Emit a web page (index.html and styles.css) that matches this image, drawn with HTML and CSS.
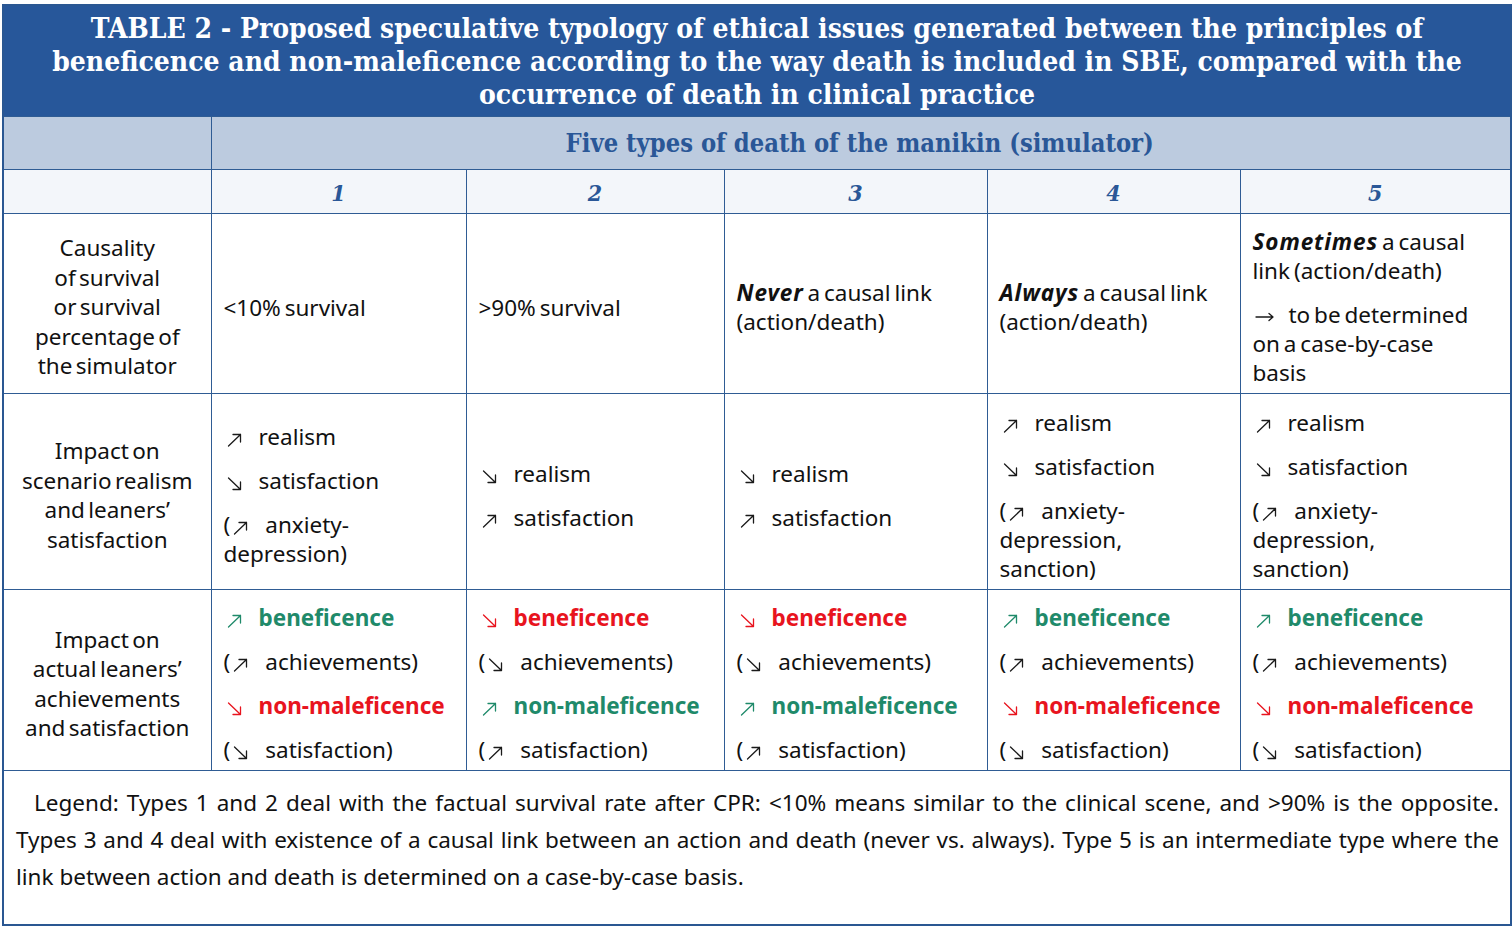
FILE: index.html
```html
<!DOCTYPE html>
<html lang="en">
<head>
<meta charset="utf-8">
<title>Table 2</title>
<link rel="stylesheet" href="styles.css">
</head>
<body>
<svg width="0" height="0" class="defs" aria-hidden="true">
  <defs>
    <symbol id="up" viewBox="0 0 15 14"><path d="M1.5 13 L13.5 1.5 M6 1.5 H13.5 V9" fill="none" stroke="currentColor" stroke-width="1.3" stroke-linecap="round" stroke-linejoin="round"/></symbol>
    <symbol id="down" viewBox="0 0 15 14"><path d="M1.5 1 L13.5 12.5 M6 12.5 H13.5 V5" fill="none" stroke="currentColor" stroke-width="1.3" stroke-linecap="round" stroke-linejoin="round"/></symbol>
    <symbol id="right" viewBox="0 0 20 10"><path d="M1 5 H18 M14 1.5 L18 5 L14 8.5" fill="none" stroke="currentColor" stroke-width="1.3" stroke-linecap="round" stroke-linejoin="round"/></symbol>
  </defs>
</svg>
<table class="tbl">
  <colgroup>
    <col class="c0"><col class="c1"><col class="c2"><col class="c3"><col class="c4"><col class="c5">
  </colgroup>
  <thead>
    <tr class="r-title">
      <th colspan="6" class="title">TABLE 2 - Proposed speculative typology of ethical issues generated between the principles of<br>beneficence and non-maleficence according to the way death is included in SBE, compared with the<br>occurrence of death in clinical practice</th>
    </tr>
    <tr class="r-head">
      <th class="blank"></th>
      <th colspan="5" class="five">Five types of death of the manikin (simulator)</th>
    </tr>
    <tr class="r-num">
      <th class="blank2"></th>
      <th class="num">1</th>
      <th class="num">2</th>
      <th class="num">3</th>
      <th class="num">4</th>
      <th class="num">5</th>
    </tr>
  </thead>
  <tbody>
    <tr class="r1">
      <td class="label">Causality<br>of survival<br>or survival<br>percentage of<br>the simulator</td>
      <td class="cell">&lt;10% survival</td>
      <td class="cell">&gt;90% survival</td>
      <td class="cell"><b class="em">Never</b> a causal link<br>(action/death)</td>
      <td class="cell"><b class="em">Always</b> a causal link<br>(action/death)</td>
      <td class="cell">
        <p class="it"><b class="em">Sometimes</b> a causal<br>link (action/death)</p>
        <p class="it"><svg class="arr arr-r"><use href="#right"/></svg>to be determined<br>on a case-by-case<br>basis</p>
      </td>
    </tr>
    <tr class="r2">
      <td class="label">Impact on<br>scenario realism<br>and leaners’<br>satisfaction</td>
      <td class="cell">
        <p class="it"><svg class="arr"><use href="#up"/></svg>realism</p>
        <p class="it"><svg class="arr"><use href="#down"/></svg>satisfaction</p>
        <p class="it">(<svg class="arr"><use href="#up"/></svg>anxiety-<br>depression)</p>
      </td>
      <td class="cell">
        <p class="it"><svg class="arr"><use href="#down"/></svg>realism</p>
        <p class="it"><svg class="arr"><use href="#up"/></svg>satisfaction</p>
      </td>
      <td class="cell">
        <p class="it"><svg class="arr"><use href="#down"/></svg>realism</p>
        <p class="it"><svg class="arr"><use href="#up"/></svg>satisfaction</p>
      </td>
      <td class="cell">
        <p class="it"><svg class="arr"><use href="#up"/></svg>realism</p>
        <p class="it"><svg class="arr"><use href="#down"/></svg>satisfaction</p>
        <p class="it">(<svg class="arr"><use href="#up"/></svg>anxiety-<br>depression,<br>sanction)</p>
      </td>
      <td class="cell">
        <p class="it"><svg class="arr"><use href="#up"/></svg>realism</p>
        <p class="it"><svg class="arr"><use href="#down"/></svg>satisfaction</p>
        <p class="it">(<svg class="arr"><use href="#up"/></svg>anxiety-<br>depression,<br>sanction)</p>
      </td>
    </tr>
    <tr class="r3">
      <td class="label">Impact on<br>actual leaners’<br>achievements<br>and satisfaction</td>
      <td class="cell">
        <p class="it good"><svg class="arr"><use href="#up"/></svg>beneficence</p>
        <p class="it">(<svg class="arr"><use href="#up"/></svg>achievements)</p>
        <p class="it bad"><svg class="arr"><use href="#down"/></svg>non-maleficence</p>
        <p class="it">(<svg class="arr"><use href="#down"/></svg>satisfaction)</p>
      </td>
      <td class="cell">
        <p class="it bad"><svg class="arr"><use href="#down"/></svg>beneficence</p>
        <p class="it">(<svg class="arr"><use href="#down"/></svg>achievements)</p>
        <p class="it good"><svg class="arr"><use href="#up"/></svg>non-maleficence</p>
        <p class="it">(<svg class="arr"><use href="#up"/></svg>satisfaction)</p>
      </td>
      <td class="cell">
        <p class="it bad"><svg class="arr"><use href="#down"/></svg>beneficence</p>
        <p class="it">(<svg class="arr"><use href="#down"/></svg>achievements)</p>
        <p class="it good"><svg class="arr"><use href="#up"/></svg>non-maleficence</p>
        <p class="it">(<svg class="arr"><use href="#up"/></svg>satisfaction)</p>
      </td>
      <td class="cell">
        <p class="it good"><svg class="arr"><use href="#up"/></svg>beneficence</p>
        <p class="it">(<svg class="arr"><use href="#up"/></svg>achievements)</p>
        <p class="it bad"><svg class="arr"><use href="#down"/></svg>non-maleficence</p>
        <p class="it">(<svg class="arr"><use href="#down"/></svg>satisfaction)</p>
      </td>
      <td class="cell">
        <p class="it good"><svg class="arr"><use href="#up"/></svg>beneficence</p>
        <p class="it">(<svg class="arr"><use href="#up"/></svg>achievements)</p>
        <p class="it bad"><svg class="arr"><use href="#down"/></svg>non-maleficence</p>
        <p class="it">(<svg class="arr"><use href="#down"/></svg>satisfaction)</p>
      </td>
    </tr>
    <tr class="r-legend">
      <td colspan="6" class="legend">
        <span class="ln ln1">Legend: Types 1 and 2 deal with the factual survival rate after CPR: &lt;10% means similar to the clinical scene, and &gt;90% is the opposite.</span>
        <span class="ln ln2">Types 3 and 4 deal with existence of a causal link between an action and death (never vs. always). Type 5 is an intermediate type where the</span>
        <span class="ln ln3">link between action and death is determined on a case-by-case basis.</span>
      </td>
    </tr>
  </tbody>
</table>
</body>
</html>
```

FILE: styles.css
```css
html, body {
  margin: 0;
  padding: 0;
  background: #ffffff;
}
body {
  padding: 4px 0 0 2px;
  font-family: "Noto Sans", Lato, sans-serif;
  color: #111111;
}
.defs {
  position: absolute;
  width: 0;
  height: 0;
  overflow: hidden;
}
.tbl {
  border-collapse: collapse;
  table-layout: fixed;
  width: 1508px;
  border: 2px solid #2a5792;
}
.c0 { width: 208px; }
.c1 { width: 255px; }
.c2 { width: 258px; }
.c3 { width: 263px; }
.c4 { width: 253px; }
.c5 { width: 271px; }

.tbl th, .tbl td {
  border: 1px solid #2f5c94;
  padding: 0;
}
.tbl .title {
  height: 110px;
  background: #27579a;
  color: #ffffff;
  font-family: "DejaVu Serif Condensed", "DejaVu Serif", serif;
  font-weight: bold;
  font-size: 28px;
  line-height: 33px;
  text-align: center;
  padding: 0;
}
.r-head th {
  height: 52px;
  background: #bccbdf;
}
.tbl .five {
  font-family: "DejaVu Serif Condensed", "DejaVu Serif", serif;
  font-weight: bold;
  font-size: 25.3px;
  color: #2a5797;
  text-align: center;
  padding-right: 2px;
}
.r-num th {
  height: 41px;
  background: #f3f6fa;
}
.tbl .num {
  font-family: "DejaVu Serif Condensed", "DejaVu Serif", serif;
  font-weight: bold;
  font-style: italic;
  font-size: 23px;
  color: #2a5797;
  text-align: center;
  padding-top: 2px;
}
.r1 td { height: 172px; }
.r2 td { height: 188px; }
.r3 td { height: 173px; }
.tbl .label {
  text-align: center;
  vertical-align: middle;
  font-size: 22.5px;
  line-height: 29.5px;
  padding: 7px 3px 0 3px;
  word-spacing: -2.5px;
}
.tbl .cell {
  vertical-align: middle;
  font-size: 22.5px;
  line-height: 29px;
  padding: 7px 4px 0 12px;
  text-align: left;
  word-spacing: -2px;
}
.it {
  margin: 0;
}
.it + .it {
  margin-top: 15px;
}
.em {
  font-style: italic;
  font-weight: bold;
  letter-spacing: 0.9px;
}
.arr {
  width: 15px;
  height: 14px;
  margin-left: 3px;
  margin-right: 17px;
  vertical-align: -2px;
  color: #1a1a1a;
}
.arr-r {
  width: 20px;
  height: 10px;
  margin-left: 2px;
  margin-right: 14px;
  vertical-align: 1px;
}
.good { color: #1f8a6a; font-weight: bold; }
.bad { color: #e8141e; font-weight: bold; }
.good .arr:first-child { color: #1f8a6a; }
.bad .arr:first-child { color: #e8141e; }
.r-legend td {
  height: 140px;
}
.tbl .legend {
  vertical-align: top;
  font-size: 22.5px;
  line-height: 37px;
  padding: 13px 11px 0 12px;
}
.ln {
  display: block;
  white-space: nowrap;
  text-align: justify;
  text-align-last: justify;
}
.ln1 { padding-left: 18px; }
.ln3 { text-align-last: left; }
```
